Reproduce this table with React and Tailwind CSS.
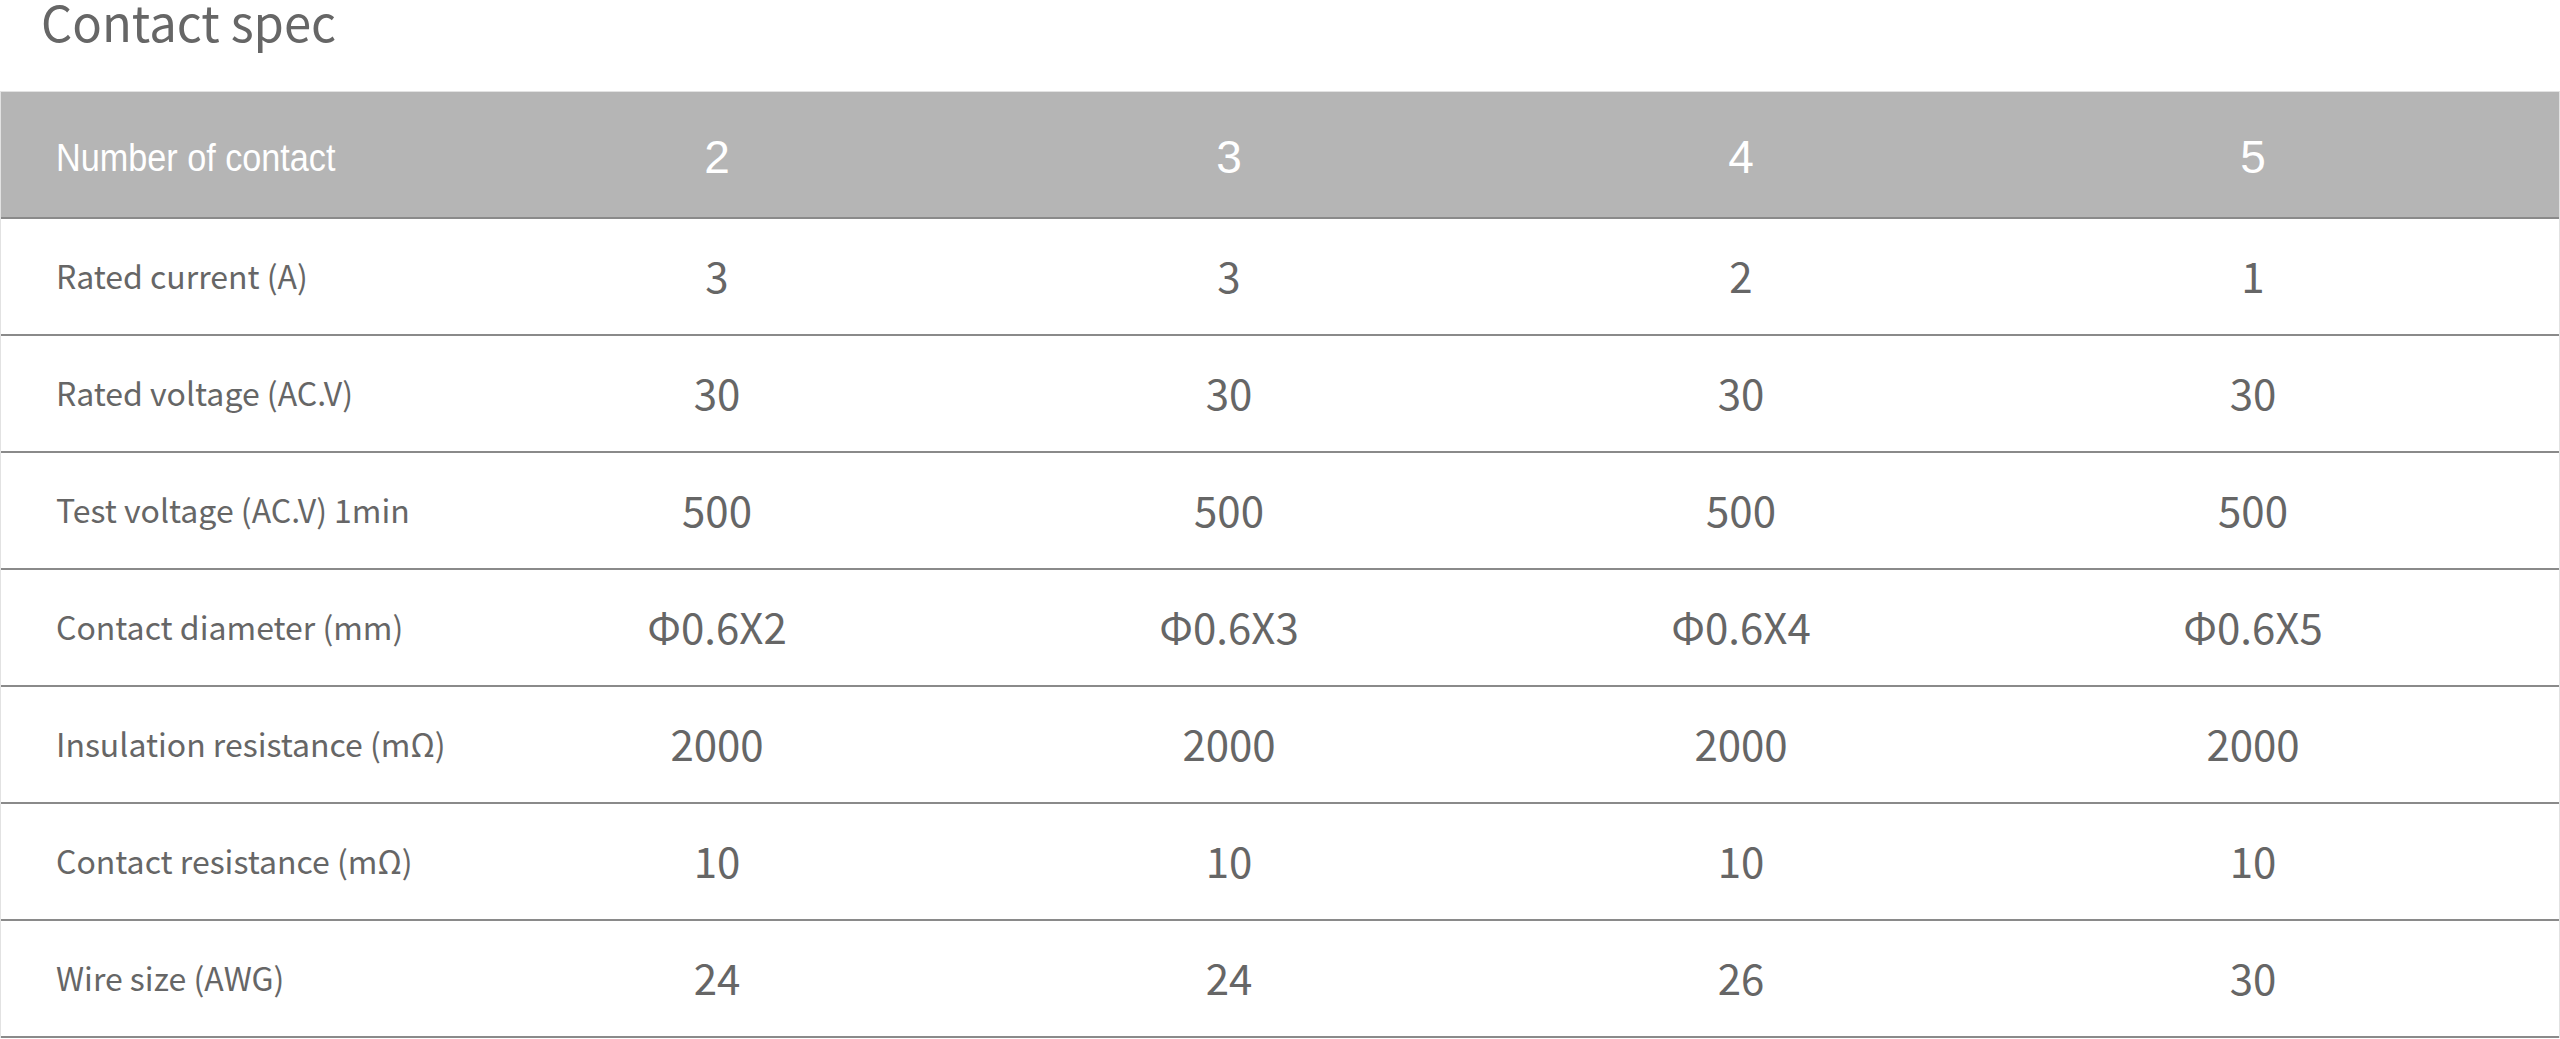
import React from 'react';

const columns = ['2', '3', '4', '5'];

const specs = [
    { label: 'Rated current (A)', values: ['3', '3', '2', '1'] },
    { label: 'Rated voltage (AC.V)', values: ['30', '30', '30', '30'] },
    { label: 'Test voltage (AC.V) 1min', values: ['500', '500', '500', '500'] },
    { label: 'Contact diameter (mm)', values: ['Φ0.6X2', 'Φ0.6X3', 'Φ0.6X4', 'Φ0.6X5'] },
    { label: 'Insulation resistance (mΩ)', values: ['2000', '2000', '2000', '2000'] },
    { label: 'Contact resistance (mΩ)', values: ['10', '10', '10', '10'] },
    { label: 'Wire size (AWG)', values: ['24', '24', '26', '30'] },
];

const sourceSans = { fontFamily: '"Noto Sans CJK KR", "Noto Sans", sans-serif' };
const arial = { fontFamily: '"Liberation Sans", Arial, sans-serif' };

const App = () => {
    return (
        <div className="w-[2560px] h-[1039px] bg-white overflow-hidden" style={sourceSans}>
            {/* Title */}
            <div className="h-[91px] pl-[41px]">
                <h2 className="text-[49px] leading-[42px] text-[#666] font-normal">Contact spec</h2>
            </div>

            {/* Spec table */}
            <div className="border-x border-t border-[#e2e2e2]">
                {/* Header */}
                <div className="grid grid-cols-[460px_512px_512px_512px_512px_1fr] h-[127px] bg-[#b5b5b5] border-b-2 border-[#8a8a8a] text-white">
                    <div className="flex items-center pl-[55px] pt-[8px]" style={arial}>
                        <span className="inline-block text-[38px] scale-x-[0.9] origin-left whitespace-nowrap">
                            Number of contact
                        </span>
                    </div>
                    {columns.map((c) => (
                        <div key={c} className="flex items-center justify-center pt-[6px] text-[46px]" style={arial}>
                            {c}
                        </div>
                    ))}
                    <div />
                </div>

                {/* Body */}
                {specs.map((row) => (
                    <div
                        key={row.label}
                        className="grid grid-cols-[460px_512px_512px_512px_512px_1fr] h-[117px] pb-[4px] border-b-2 border-[#8a8a8a] text-[#666]"
                    >
                        <div className="flex items-center pl-[55px] text-[32px]">{row.label}</div>
                        {row.values.map((v, i) => (
                            <div key={i} className="flex items-center justify-center text-[42px]">
                                {v}
                            </div>
                        ))}
                        <div />
                    </div>
                ))}
            </div>
        </div>
    );
};

export default App;
